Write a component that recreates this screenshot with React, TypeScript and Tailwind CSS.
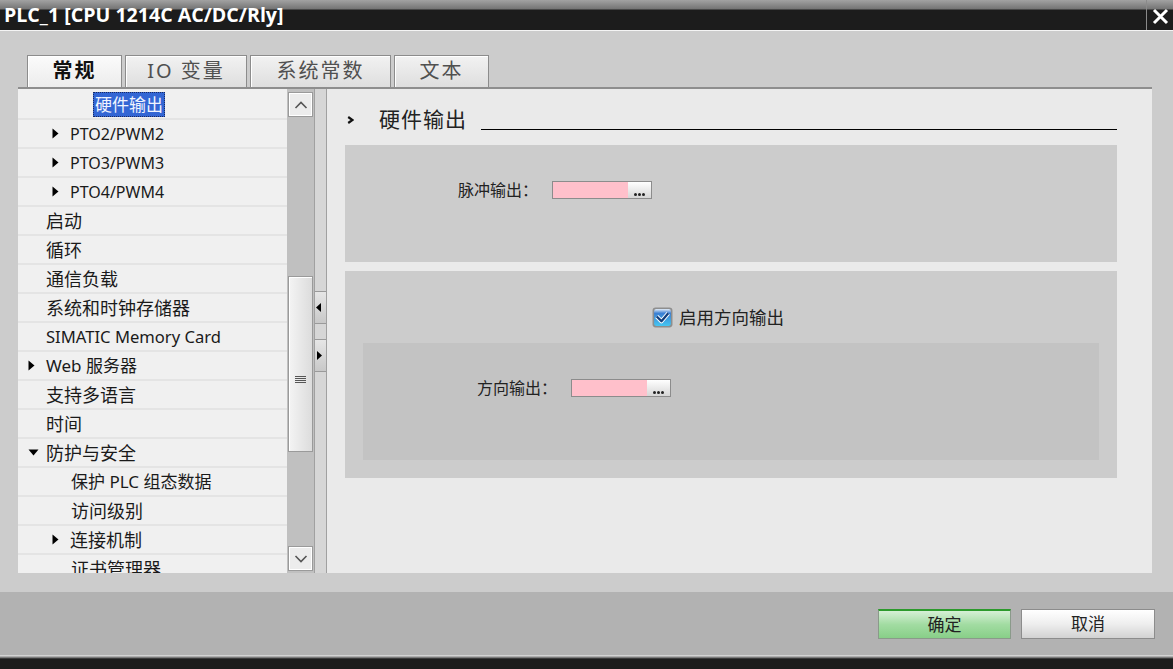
type TreeItem = {
  label: string;
  pad: string;
  size: string;
  arrow?: "right" | "down";
  selected?: boolean;
};

const cjk = "font-['Noto_Sans','Noto_Sans_CJK_SC',sans-serif]";

const items: TreeItem[] = [
  { label: "硬件输出", pad: "pl-[75px]", size: "text-[17px]", selected: true },
  { label: "PTO2/PWM2", pad: "pl-[34px]", size: "text-[16px]", arrow: "right" },
  { label: "PTO3/PWM3", pad: "pl-[34px]", size: "text-[16px]", arrow: "right" },
  { label: "PTO4/PWM4", pad: "pl-[34px]", size: "text-[16px]", arrow: "right" },
  { label: "启动", pad: "pl-[28px]", size: "text-[18px]" },
  { label: "循环", pad: "pl-[28px]", size: "text-[18px]" },
  { label: "通信负载", pad: "pl-[28px]", size: "text-[18px]" },
  { label: "系统和时钟存储器", pad: "pl-[28px]", size: "text-[18px]" },
  { label: "SIMATIC Memory Card", pad: "pl-[28px]", size: "text-[16.6px]" },
  { label: "Web 服务器", pad: "pl-[10px]", size: "text-[17px]", arrow: "right" },
  { label: "支持多语言", pad: "pl-[28px]", size: "text-[18px]" },
  { label: "时间", pad: "pl-[28px]", size: "text-[18px]" },
  { label: "防护与安全", pad: "pl-[10px]", size: "text-[18px]", arrow: "down" },
  { label: "保护 PLC 组态数据", pad: "pl-[53px]", size: "text-[17px]" },
  { label: "访问级别", pad: "pl-[53px]", size: "text-[18px]" },
  { label: "连接机制", pad: "pl-[34px]", size: "text-[18px]", arrow: "right" },
  { label: "证书管理器", pad: "pl-[53px]", size: "text-[18px]" },
];

function Arrow({ dir }: { dir: "right" | "down" }) {
  return (
    <span className="flex w-[18px] shrink-0 items-center">
      {dir === "right" ? (
        <svg width="7" height="11" viewBox="0 0 7 11">
          <path d="M0.5 0.5 L6.5 5.5 L0.5 10.5 Z" fill="#000" />
        </svg>
      ) : (
        <svg width="11" height="7" viewBox="0 0 11 7">
          <path d="M0.5 0.5 L10.5 0.5 L5.5 6.5 Z" fill="#000" />
        </svg>
      )}
    </span>
  );
}

function Tree() {
  return (
    <div className="w-[269px] shrink-0 overflow-hidden bg-[#f0f0f0] pt-[2px]">
      {items.map((it) => (
        <div
          key={it.label}
          className={`flex h-[29px] items-center border-b-2 border-[#e4e4e4] ${it.pad} ${it.size} ${cjk} text-[#1a1a1a]`}
        >
          {it.arrow && <Arrow dir={it.arrow} />}
          {it.selected ? (
            <span className="border border-dotted border-[#1a2a60] bg-[#3366d4] px-[1px] leading-[23px] text-[#f0f4ff]">
              {it.label}
            </span>
          ) : (
            <span className="whitespace-nowrap leading-[24px]">{it.label}</span>
          )}
        </div>
      ))}
    </div>
  );
}

function ScrollBtn({ up }: { up?: boolean }) {
  return (
    <div className="mx-[1px] flex h-[25px] items-center justify-center border border-[#9a9a9a] bg-[#ececec] shadow-[inset_1px_1px_0_#ffffff,inset_-1px_-1px_0_#ffffff]">
      <svg width="14" height="8" viewBox="0 0 14 8">
        <path d={up ? "M1.5 7 L7 1.5 L12.5 7" : "M1.5 1 L7 6.5 L12.5 1"} fill="none" stroke="#555" strokeWidth="1.6" />
      </svg>
    </div>
  );
}

function Scrollbar() {
  return (
    <div className="flex w-[27px] shrink-0 flex-col bg-[#c0c0c0] pt-[3px] pb-[2px]">
      <ScrollBtn up />
      <div className="h-[159px]" />
      <div className="mx-[1px] flex h-[176px] flex-col items-center justify-center border border-[#9a9a9a] bg-[linear-gradient(to_right,#f4f4f4,#dcdcdc)] pt-[30px] shadow-[inset_1px_1px_0_#ffffff]">
        <div className="flex flex-col gap-[1px]">
          <div className="h-[1px] w-[11px] bg-[#555]" />
          <div className="h-[1px] w-[11px] bg-[#555]" />
          <div className="h-[1px] w-[11px] bg-[#555]" />
          <div className="h-[1px] w-[11px] bg-[#555]" />
        </div>
      </div>
      <div className="flex-1" />
      <ScrollBtn />
    </div>
  );
}

function Splitter() {
  return (
    <div className="flex w-[13px] shrink-0 flex-col gap-[15px] border-x border-[#a0a0a0] bg-[#d6d6d6] pt-[202px]">
      <div className="flex h-[33px] items-center border-y border-[#9a9a9a] bg-[linear-gradient(to_bottom,#e6e6e6,#c8c8c8)] pl-[1px]">
        <svg width="5" height="9" viewBox="0 0 5 9">
          <path d="M5 0 L0 4.5 L5 9 Z" fill="#000" />
        </svg>
      </div>
      <div className="flex h-[33px] items-center border-y border-[#9a9a9a] bg-[linear-gradient(to_bottom,#e6e6e6,#c8c8c8)] pl-[2px]">
        <svg width="5" height="9" viewBox="0 0 5 9">
          <path d="M0 0 L5 4.5 L0 9 Z" fill="#000" />
        </svg>
      </div>
    </div>
  );
}

function PickField() {
  return (
    <div className="flex h-[18px] w-[100px] border border-[#8c8c8c] bg-[#ffc0cb]">
      <div className="flex-1" />
      <div className="flex w-[23px] items-end justify-center gap-[1px] bg-[linear-gradient(to_bottom,#ffffff,#d6d6d6)] pb-[2px]">
        <div className="h-[3px] w-[3px] rounded-full bg-[#222]" />
        <div className="h-[3px] w-[3px] rounded-full bg-[#222]" />
        <div className="h-[3px] w-[3px] rounded-full bg-[#222]" />
      </div>
    </div>
  );
}

function Checkbox() {
  return (
    <svg width="21" height="21" viewBox="0 0 20 20">
      <defs>
        <linearGradient id="cb" x1="0" y1="0" x2="0" y2="1">
          <stop offset="0" stopColor="#dfeaf7" />
          <stop offset="0.25" stopColor="#3b7fd3" />
          <stop offset="1" stopColor="#45c6f2" />
        </linearGradient>
      </defs>
      <rect x="0.5" y="0.5" width="19" height="19" rx="3" fill="#8e8e8e" />
      <rect x="2" y="2" width="16" height="16" rx="2" fill="url(#cb)" />
      <path d="M4.5 9 L9 13.5 L15.5 6" fill="none" stroke="#ffffff" strokeWidth="4" strokeLinejoin="round" />
      <path d="M4.5 9 L9 13.5 L15.5 6" fill="none" stroke="#143f7c" strokeWidth="2.2" strokeLinejoin="round" />
    </svg>
  );
}

function Details() {
  return (
    <div className={`flex flex-1 flex-col bg-[#eaeaea] pl-[18px] pr-[35px] ${cjk} text-[#222]`}>
      <div className="flex h-[56px] items-end pb-[13px]">
        <span className="flex w-[34px] items-center pb-[8px] pl-[2px]">
          <svg width="7" height="8" viewBox="0 0 7 8">
            <path d="M1.2 1 L5.5 4 L1.2 7" fill="none" stroke="#111" strokeWidth="2.2" />
          </svg>
        </span>
        <span className="text-[21px] leading-[26px] tracking-[1px]">硬件输出</span>
        <div className="mb-[2px] ml-[14px] h-0 flex-1 border-b border-black" />
      </div>
      <div className="h-[117px] bg-[#cccccc] pt-[36px] pl-[113px]">
        <div className="flex h-[18px] items-center">
          <span className="text-[16px] leading-[18px]">脉冲输出：</span>
          <div className="ml-[14px]">
            <PickField />
          </div>
        </div>
      </div>
      <div className="mt-[9px] h-[207px] bg-[#cccccc] px-[18px] pt-[36px]">
        <div className="flex h-[20px] items-center pl-[289px]">
          <Checkbox />
          <span className="ml-[6px] text-[17.5px] leading-[20px]">启用方向输出</span>
        </div>
        <div className="mt-[16px] h-[117px] bg-[#c3c3c3] pt-[36px] pl-[114px]">
          <div className="flex h-[18px] items-center">
            <span className="text-[16px] leading-[18px]">方向输出：</span>
            <div className="ml-[14px]">
              <PickField />
            </div>
          </div>
        </div>
      </div>
    </div>
  );
}

const tabs = [
  { label: "常规", w: "w-[95px]", active: true },
  { label: "IO 变量", w: "w-[122px]" },
  { label: "系统常数", w: "w-[141px]" },
  { label: "文本", w: "w-[95px]" },
];

export default function App() {
  return (
    <div className="flex h-[669px] w-[1173px] flex-col overflow-hidden bg-[#cccccc]">
      <div className="flex h-[30px] shrink-0 items-center bg-[linear-gradient(to_bottom,#a2a2a2_0px,#747474_9px,#1c1c1c_10px,#1c1c1c_100%)]">
        <span className="flex-1 pl-[4px] font-['Open_Sans',sans-serif] text-[19.6px] font-bold leading-[30px] text-white">
          PLC_1 [CPU 1214C AC/DC/Rly]
        </span>
        <div className="flex h-full w-[27px] items-center justify-center border-l border-[#8a8a8a] pt-[3px]">
          <svg width="17" height="17" viewBox="0 0 17 17">
            <path d="M2 2 L15 15 M15 2 L2 15" stroke="#fff" strokeWidth="3" />
          </svg>
        </div>
      </div>
      <div className="h-[1px] shrink-0 bg-[#f4f4f4]" />

      <div className="flex shrink-0 gap-[3px] pt-[24px] pl-[27px]">
        {tabs.map((t) => (
          <div
            key={t.label}
            className={`flex h-[32px] ${t.w} items-center justify-center border border-b-0 border-[#8c8c8c] pb-[2px] ${cjk} text-[20px] tracking-[2px] ${
              t.active
                ? "bg-[linear-gradient(to_bottom,#fbfbfb,#ececec)] font-bold text-[#111]"
                : "bg-[linear-gradient(to_bottom,#f2f2f2,#dedede)] text-[#505050]"
            } shadow-[inset_1px_1px_0_#ffffff]`}
          >
            {t.label}
          </div>
        ))}
      </div>

      <div className="ml-[18px] mr-[21px] flex h-[486px] shrink-0 border-t-2 border-[#8e8e8e]">
        <Tree />
        <Scrollbar />
        <Splitter />
        <Details />
      </div>

      <div className="h-[19px] shrink-0" />

      <div className="flex h-[63px] shrink-0 justify-end gap-[10px] bg-[#b2b2b2] pt-[17px] pr-[18px]">
        <button className={`h-[30px] w-[133px] border border-[#8a9a8a] border-t-2 border-t-[#2c9a2c] bg-[linear-gradient(to_bottom,#d6f0d6,#a2dca2_50%,#88cf88)] ${cjk} text-[17px] text-[#222]`}>
          确定
        </button>
        <button className={`h-[30px] w-[134px] border border-[#8c8c8c] bg-[linear-gradient(to_bottom,#ffffff,#eeeeee_50%,#d2d2d2)] ${cjk} text-[17px] text-[#222]`}>
          取消
        </button>
      </div>

      <div className="flex-1 bg-[linear-gradient(to_bottom,#e6e6e6_0px,#9a9a9a_2px,#5c5c5c_3px,#1c1c1c_4px)]" />
    </div>
  );
}
